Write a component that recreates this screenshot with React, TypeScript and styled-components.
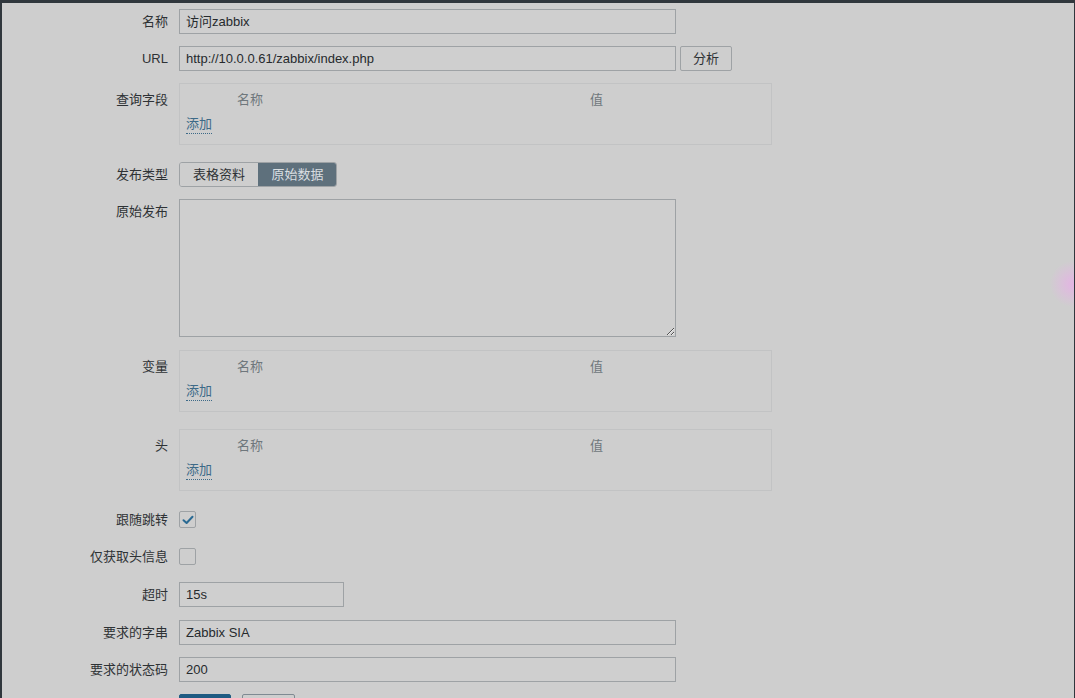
import React from 'react';
import styled, { createGlobalStyle } from 'styled-components';

const GlobalStyle = createGlobalStyle`
  html, body {
    margin: 0;
    padding: 0;
    background: #cecece;
  }
  * {
    box-sizing: border-box;
  }
`;

const FONT = `Arial, "Liberation Sans", "Noto Sans CJK SC", sans-serif`;

const Frame = styled.div`
  position: relative;
  width: 1075px;
  height: 698px;
  overflow: hidden;
  background: #cecece;
  border-top: 3px solid #30373d;
  border-left: 2px solid #30373d;
  border-right: 1px solid #30373d;
  font-family: ${FONT};
  font-size: 13px;
  color: #2e3235;
`;

const Form = styled.div`
  display: flex;
  flex-direction: column;
  gap: 12px;
  padding-top: 6px;
`;

const Row = styled.div<{ $extra?: number }>`
  display: flex;
  align-items: flex-start;
  gap: 11px;
  margin-top: ${(p) => p.$extra ?? 0}px;
`;

const Label = styled.div<{ $offset?: number }>`
  width: 166px;
  flex-shrink: 0;
  text-align: right;
  line-height: 25px;
  padding-top: ${(p) => p.$offset ?? 0}px;
  white-space: nowrap;
`;

const Field = styled.div<{ $width: number }>`
  width: ${(p) => p.$width}px;
  height: 25px;
  border: 1px solid #9ea2a5;
  background: #cfcfcf;
  padding: 0 6px;
  line-height: 23px;
  color: #262a2d;
  white-space: nowrap;
`;

const Controls = styled.div`
  display: flex;
  gap: 4px;
`;

const Button = styled.div`
  height: 25px;
  padding: 0 12px;
  line-height: 23px;
  border: 1px solid #9ea2a5;
  border-radius: 2px;
  background: #cecece;
  color: #2e3235;
`;

const Box = styled.div`
  width: 593px;
  height: 62px;
  border: 1px solid #c2c3c4;
  padding: 6px 6px 0;
`;

const BoxHeader = styled.div`
  display: grid;
  grid-template-columns: 51px 353px 1fr;
  line-height: 20px;
  color: #6f777c;
`;

const AddLink = styled.span`
  display: inline-block;
  margin-top: 5px;
  line-height: 18px;
  color: #3d6a88;
  border-bottom: 1px dotted #3d6a88;
`;

const Segmented = styled.div`
  display: flex;
  height: 25px;
  border: 1px solid #9ea2a5;
  border-radius: 3px;
  overflow: hidden;
`;

const Segment = styled.div<{ $active?: boolean }>`
  width: 78px;
  text-align: center;
  line-height: 23px;
  background: ${(p) => (p.$active ? '#5e707c' : '#cecece')};
  color: ${(p) => (p.$active ? '#d9dee1' : '#2e3235')};
  border-left: ${(p) => (p.$active ? '1px solid #5e707c' : 'none')};
`;

const TextArea = styled.textarea`
  width: 497px;
  height: 138px;
  margin: 0;
  border: 1px solid #9ea2a5;
  background: #cfcfcf;
  resize: vertical;
  font-family: ${FONT};
  font-size: 13px;
  outline: none;
`;

const CheckRow = styled.div`
  height: 25px;
  display: flex;
  align-items: center;
`;

const Check = styled.div`
  width: 17px;
  height: 17px;
  border: 1px solid #9ea2a5;
  border-radius: 2px;
  background: #cecece;
  display: flex;
  align-items: center;
  justify-content: center;
`;

const BottomButton = styled.div<{ $primary?: boolean }>`
  width: ${(p) => (p.$primary ? 52 : 53)}px;
  height: 25px;
  border-radius: 2px;
  background: ${(p) => (p.$primary ? '#1f5b82' : '#cecece')};
  border: 1px solid ${(p) => (p.$primary ? '#1f5b82' : '#7f8a92')};
`;

const BottomControls = styled.div`
  display: flex;
  gap: 11px;
`;

const Glow = styled.div`
  position: absolute;
  right: -22px;
  top: 258px;
  width: 46px;
  height: 46px;
  border-radius: 50%;
  background: radial-gradient(circle, rgba(236, 170, 236, 0.7) 0%, rgba(230, 180, 230, 0.35) 45%, rgba(206, 206, 206, 0) 72%);
  pointer-events: none;
`;

const PairBox: React.FC = () => (
  <Box>
    <BoxHeader>
      <span />
      <span>名称</span>
      <span>值</span>
    </BoxHeader>
    <AddLink>添加</AddLink>
  </Box>
);

const Tick = () => (
  <svg width="12" height="10" viewBox="0 0 12 10">
    <path d="M1.5 5.2 L4.6 8 L10.5 1.8" fill="none" stroke="#2a6a93" strokeWidth="2" strokeLinecap="round" strokeLinejoin="round" />
  </svg>
);

export default function App() {
  return (
    <>
      <GlobalStyle />
      <Frame>
        <Form>
          <Row>
            <Label>名称</Label>
            <Field $width={497}>访问zabbix</Field>
          </Row>
          <Row>
            <Label>URL</Label>
            <Controls>
              <Field $width={497}>http://10.0.0.61/zabbix/index.php</Field>
              <Button>分析</Button>
            </Controls>
          </Row>
          <Row>
            <Label $offset={4}>查询字段</Label>
            <PairBox />
          </Row>
          <Row $extra={5}>
            <Label>发布类型</Label>
            <Segmented>
              <Segment>表格资料</Segment>
              <Segment $active>原始数据</Segment>
            </Segmented>
          </Row>
          <Row>
            <Label>原始发布</Label>
            <TextArea />
          </Row>
          <Row $extra={1}>
            <Label $offset={4}>变量</Label>
            <PairBox />
          </Row>
          <Row $extra={5}>
            <Label $offset={4}>头</Label>
            <PairBox />
          </Row>
          <Row $extra={4}>
            <Label>跟随跳转</Label>
            <CheckRow>
              <Check>
                <Tick />
              </Check>
            </CheckRow>
          </Row>
          <Row>
            <Label>仅获取头信息</Label>
            <CheckRow>
              <Check />
            </CheckRow>
          </Row>
          <Row $extra={1}>
            <Label>超时</Label>
            <Field $width={165}>15s</Field>
          </Row>
          <Row $extra={1}>
            <Label>要求的字串</Label>
            <Field $width={497}>Zabbix SIA</Field>
          </Row>
          <Row>
            <Label>要求的状态码</Label>
            <Field $width={497}>200</Field>
          </Row>
          <Row>
            <Label />
            <BottomControls>
              <BottomButton $primary />
              <BottomButton />
            </BottomControls>
          </Row>
        </Form>
        <Glow />
      </Frame>
    </>
  );
}
